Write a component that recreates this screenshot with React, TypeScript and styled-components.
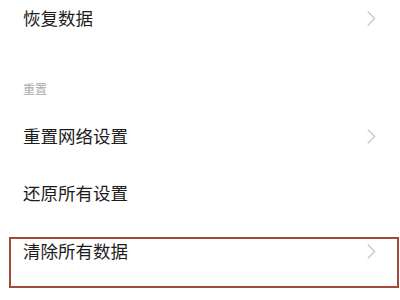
import React from "react";
import styled, { createGlobalStyle } from "styled-components";

const Global = createGlobalStyle`
  html, body {
    margin: 0;
    padding: 0;
    background: #ffffff;
  }
  body {
    font-family: "Noto Sans CJK SC", "Noto Sans", sans-serif;
    -webkit-font-smoothing: antialiased;
  }
`;

const Page = styled.div`
  width: 400px;
  height: 300px;
  overflow: hidden;
  background: #ffffff;
  display: flex;
  flex-direction: column;
`;

const Row = styled.div<{ $height: number }>`
  height: ${(p) => p.$height}px;
  flex: none;
  display: flex;
  align-items: center;
  justify-content: space-between;
  padding: 0 24px 0 23px;
  box-sizing: border-box;
`;

const Label = styled.span`
  font-size: 17.5px;
  line-height: 24px;
  color: #1c1c1c;
  letter-spacing: 0;
`;

const SectionHeader = styled.div`
  flex: none;
  padding: 44px 23px 9.5px;
  font-size: 12px;
  line-height: 18px;
  color: #ababab;
`;

const Highlight = styled.div`
  flex: none;
  margin: 15.5px 1px 0 9px;
  height: 51px;
  box-sizing: border-box;
  border: 2px solid #a4473d;
  display: flex;
  align-items: flex-start;
  justify-content: space-between;
  padding: 0 21px 0 12px;
`;

const ChevronBox = styled.span`
  display: flex;
  width: 9px;
  height: 24px;
  align-items: center;
  justify-content: center;
`;

const Chevron = () => (
  <ChevronBox>
    <svg width="9" height="15" viewBox="0 0 9 15" fill="none">
      <path
        d="M1.2 1 L7.6 7.5 L1.2 14"
        stroke="#c9c9c9"
        strokeWidth="1.4"
        strokeLinecap="round"
        strokeLinejoin="round"
      />
    </svg>
  </ChevronBox>
);

export default function App() {
  return (
    <>
      <Global />
      <Page>
        <Row $height={36}>
          <Label>恢复数据</Label>
          <Chevron />
        </Row>
        <SectionHeader>重置</SectionHeader>
        <Row $height={57}>
          <Label>重置网络设置</Label>
          <Chevron />
        </Row>
        <Row $height={57}>
          <Label>还原所有设置</Label>
        </Row>
        <Highlight>
          <Label>清除所有数据</Label>
          <Chevron />
        </Highlight>
      </Page>
    </>
  );
}
